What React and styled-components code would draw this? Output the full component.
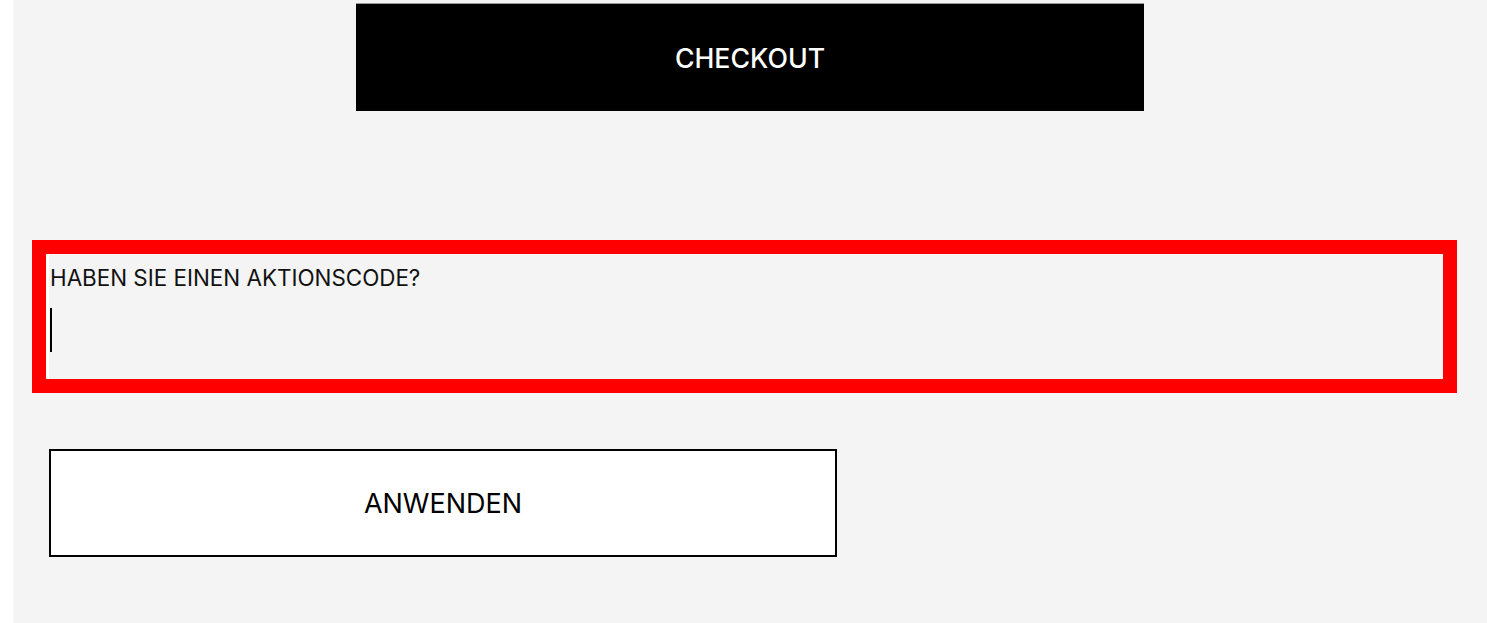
import React from 'react';
import styled, { createGlobalStyle } from 'styled-components';

const GlobalStyle = createGlobalStyle`
    html, body {
        margin: 0;
        padding: 0;
        background: #ffffff;
        font-family: Inter, "Liberation Sans", sans-serif;
    }
    * {
        box-sizing: border-box;
    }
`;

export default function App() {
    return (
        <>
            <GlobalStyle />
            <Cart>
                <CheckoutButton type="button">CHECKOUT</CheckoutButton>
                <PromoBox>
                    <PromoField>
                        <PromoLabel htmlFor="promo">HABEN SIE EINEN AKTIONSCODE?</PromoLabel>
                        <InputWrap>
                            <PromoInput id="promo" type="text" />
                            <Caret />
                        </InputWrap>
                    </PromoField>
                </PromoBox>
                <ApplyButton type="button">ANWENDEN</ApplyButton>
            </Cart>
        </>
    );
}

const Cart = styled.div`
    margin-left: 13px;
    min-height: 100vh;
    padding-top: 3px;
    background: #f4f4f4;
    display: flex;
    flex-direction: column;
`;

const CheckoutButton = styled.button`
    align-self: center;
    width: 788px;
    height: 108px;
    border: none;
    border-top: 1px solid #9a9a9a;
    background: #000;
    color: #fff;
    font-family: Inter, "Liberation Sans", sans-serif;
    font-size: 26.7px;
    font-weight: 500;
    cursor: pointer;
`;

const PromoBox = styled.div`
    margin: 129px 30px 0 19px;
    height: 153px;
    border: 14px solid #ff0000;
`;

const PromoField = styled.div`
    height: 100%;
    border-left: 3px solid #ffffff;
    padding: 11px 0 0 1px;
    display: flex;
    flex-direction: column;
`;

const PromoLabel = styled.label`
    font-size: 22.4px;
    line-height: 26px;
    color: #111;
`;

const InputWrap = styled.div`
    position: relative;
    margin-top: 17px;
    height: 44px;
`;

const PromoInput = styled.input`
    width: 100%;
    height: 44px;
    padding: 0;
    border: none;
    outline: none;
    background: transparent;
    font-family: Inter, "Liberation Sans", sans-serif;
    font-size: 36px;
    caret-color: transparent;
`;

const Caret = styled.span`
    position: absolute;
    left: 0;
    top: 0;
    width: 2px;
    height: 44px;
    background: #000;
`;

const ApplyButton = styled.button`
    margin: 56px 0 0 36px;
    width: 788px;
    height: 108px;
    border: 2px solid #000;
    background: #fff;
    color: #000;
    font-family: Inter, "Liberation Sans", sans-serif;
    font-size: 27px;
    font-weight: 400;
    cursor: pointer;
`;
